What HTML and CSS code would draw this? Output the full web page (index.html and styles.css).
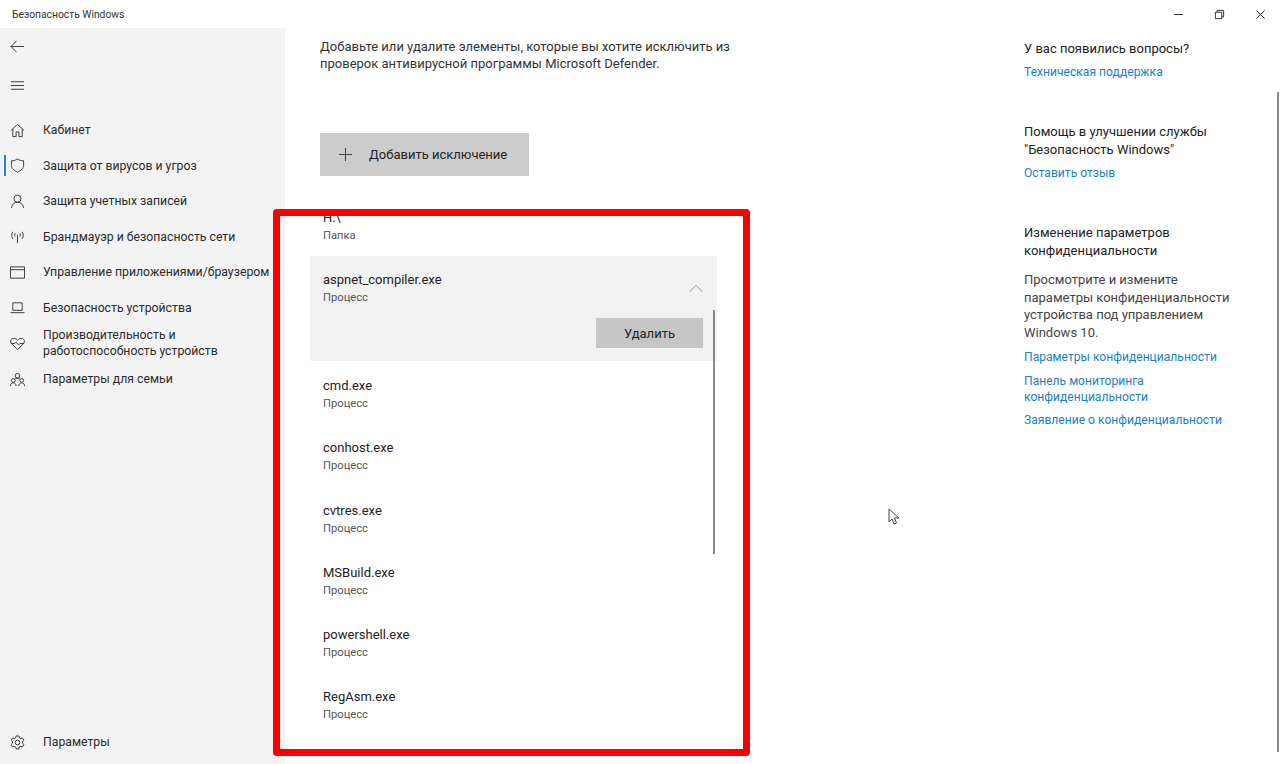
FILE: index.html
```html
<!DOCTYPE html>
<html lang="ru">
<head>
    <meta charset="UTF-8">
    <meta name="viewport" content="width=device-width, initial-scale=1.0">
    <title>Безопасность Windows</title>
    <link rel="stylesheet" href="styles.css">
</head>
<body>
    <div class="window">
        <div class="titlebar">
            <span class="app-title">Безопасность Windows</span>
            <div class="win-buttons">
                <svg viewBox="0 0 12 12"><path d="M1 6h10"/></svg>
                <svg viewBox="0 0 12 12"><path d="M1.500 3.500h7v7h-7zM3.500 3.500v-2h7v7h-2"/></svg>
                <svg viewBox="0 0 12 12"><path d="M1.500 1.500l9 9M10.500 1.500l-9 9"/></svg>
            </div>
        </div>
        <div class="content">
            <nav class="sidebar">
                <div class="nav-top">
                    <svg class="icon" viewBox="0 0 16 16"><path d="M1 8h14M1 8l6-6M1 8l6 6"/></svg>
                    <svg class="icon" viewBox="0 0 16 16"><path d="M1 4h14M1 8h14M1 12h14"/></svg>
                </div>
                <ul class="nav-list">
                    <li class="nav-item">
                        <svg class="icon" viewBox="0 0 16 16"><path d="M1 8l7-6.500L15 8M3 6.500V14.500h3.500V9.500h3v5H13V6.500"/></svg>
                        <span>Кабинет</span>
                    </li>
                    <li class="nav-item active">
                        <svg class="icon" viewBox="0 0 16 16"><path d="M8 1c2 1.500 4 2 6.500 2v5c0 3.500-3 5.500-6.500 7-3.500-1.500-6.500-3.500-6.500-7V3C4 3 6 2.500 8 1z"/></svg>
                        <span>Защита от вирусов и угроз</span>
                    </li>
                    <li class="nav-item">
                        <svg class="icon" viewBox="0 0 16 16"><circle cx="8" cy="5" r="3.800"/><path d="M1.500 15c.5-4 3-6.200 6.500-6.200s6 2.200 6.500 6.200"/></svg>
                        <span>Защита учетных записей</span>
                    </li>
                    <li class="nav-item">
                        <svg class="icon" viewBox="0 0 16 16"><path d="M8 6v9M5.500 4.500c-.7 1-.7 2.500 0 3.500M10.500 4.500c.7 1 .7 2.500 0 3.500M3 3c-1.500 2-1.500 5.500 0 7.500M13 3c1.500 2 1.500 5.500 0 7.500"/></svg>
                        <span>Брандмауэр и безопасность сети</span>
                    </li>
                    <li class="nav-item">
                        <svg class="icon" viewBox="0 0 16 16"><path d="M.5 2h15v12H.5zM.5 5h15"/></svg>
                        <span>Управление приложениями/браузером</span>
                    </li>
                    <li class="nav-item">
                        <svg class="icon" viewBox="0 0 16 16"><path d="M3 3h10v8H3zM.5 13.500h15"/></svg>
                        <span>Безопасность устройства</span>
                    </li>
                    <li class="nav-item two-lines">
                        <svg class="icon" viewBox="0 0 16 16"><path d="M8 14.500L1.500 8C0 6 .5 3.500 2.500 2.800 5 2 6.500 3 8 4.500c1.500-1.500 3-2.500 5.500-1.700 2 .7 2.500 3.200 1 5.200zM1 8h4l1.500-1.500L9 9.500 10.500 8H15"/></svg>
                        <span>Производительность и<br>работоспособность устройств</span>
                    </li>
                    <li class="nav-item">
                        <svg class="icon" viewBox="0 0 16 16"><circle cx="8" cy="4" r="2.500"/><circle cx="3.500" cy="9" r="2"/><circle cx="12.500" cy="9" r="2"/><path d="M.5 15c0-2 1.200-3.500 3-3.500s3 1.500 3 3.500M9.500 15c0-2 1.200-3.500 3-3.500s3 1.500 3 3.500M5.500 7.500C6 7 7 6.500 8 6.500s2 .5 2.500 1"/></svg>
                        <span>Параметры для семьи</span>
                    </li>
                </ul>
                <div class="nav-item nav-bottom">
                    <svg class="icon" viewBox="0 0 16 16"><circle cx="8" cy="8" r="2.500"/><path d="M6.500 1h3l.4 2 1.500.8 1.900-.7 1.500 2.600-1.500 1.300v1.800l1.500 1.300-1.500 2.600-1.900-.7-1.500.8-.4 2h-3l-.4-2-1.500-.8-1.900.7L1.200 10.100l1.500-1.300V7L1.200 5.700l1.500-2.600 1.900.7 1.500-.8z"/></svg>
                    <span>Параметры</span>
                </div>
            </nav>

            <main class="main">
                <p class="intro">Добавьте или удалите элементы, которые вы хотите исключить из проверок антивирусной программы Microsoft Defender.</p>
                <button class="add-btn">
                    <svg viewBox="0 0 16 16"><path d="M8 1v14M1 8h14"/></svg>
                    <span>Добавить исключение</span>
                </button>
                <div class="list">
                    <div class="list-item first">
                        <div class="item-name">H:\</div>
                        <div class="item-type">Папка</div>
                    </div>
                    <div class="list-item open">
                        <div class="item-name">aspnet_compiler.exe</div>
                        <div class="item-type">Процесс</div>
                        <svg class="chevron" viewBox="0 0 16 10"><path d="M1 8.500l7-7 7 7"/></svg>
                        <div class="item-actions"><button class="remove-btn">Удалить</button></div>
                    </div>
                    <div class="list-item">
                        <div class="item-name">cmd.exe</div>
                        <div class="item-type">Процесс</div>
                    </div>
                    <div class="list-item">
                        <div class="item-name">conhost.exe</div>
                        <div class="item-type">Процесс</div>
                    </div>
                    <div class="list-item">
                        <div class="item-name">cvtres.exe</div>
                        <div class="item-type">Процесс</div>
                    </div>
                    <div class="list-item">
                        <div class="item-name">MSBuild.exe</div>
                        <div class="item-type">Процесс</div>
                    </div>
                    <div class="list-item">
                        <div class="item-name">powershell.exe</div>
                        <div class="item-type">Процесс</div>
                    </div>
                    <div class="list-item">
                        <div class="item-name">RegAsm.exe</div>
                        <div class="item-type">Процесс</div>
                    </div>
                    <div class="list-scroll"></div>
                </div>
            </main>

            <aside class="side-info">
                <section class="info-block">
                    <h3>У вас появились вопросы?</h3>
                    <a class="link">Техническая поддержка</a>
                </section>
                <section class="info-block">
                    <h3>Помощь в улучшении службы "Безопасность Windows"</h3>
                    <a class="link">Оставить отзыв</a>
                </section>
                <section class="info-block">
                    <h3>Изменение параметров конфиденциальности</h3>
                    <p>Просмотрите и измените параметры конфиденциальности устройства под управлением Windows 10.</p>
                    <a class="link">Параметры конфиденциальности</a>
                    <a class="link">Панель мониторинга конфиденциальности</a>
                    <a class="link">Заявление о конфиденциальности</a>
                </section>
            </aside>
        </div>
        <div class="page-scroll"></div>
    </div>

    <!-- annotation and pointer lie over the page -->
    <div class="red-frame"></div>
    <svg class="cursor" viewBox="0 0 12 18"><path d="M1 1v13l3-3 2 5 2.500-1-2-5H11z"/></svg>
</body>
</html>
```

FILE: styles.css
```css
*{
    box-sizing: border-box;
}
html, body{
    height: 100%;
}
body{
    margin: 0;
    background: #fff;
    color: #1f1f1f;
    font-family: Roboto, "Noto Sans", sans-serif;
    font-size: 13px;
    overflow: hidden;
}
.window{
    position: relative;
    width: 1280px;
    height: 764px;
    display: flex;
    flex-direction: column;
}
svg{
    fill: none;
    stroke: #333;
    stroke-width: 1;
}

/* title bar */
.titlebar{
    height: 28px;
    flex: none;
    display: flex;
    justify-content: space-between;
    align-items: center;
    padding-left: 12px;
}
.app-title{
    font-size: 10.300px;
    color: #333;
}
.win-buttons{
    display: flex;
    gap: 30px;
    padding-right: 14px;
}
.win-buttons svg{
    width: 11px;
    height: 11px;
    stroke: #222;
}

.content{
    flex: 1;
    display: flex;
    min-height: 0;
}

/* left nav */
.sidebar{
    width: 285px;
    flex: none;
    background: #f3f3f3;
    display: flex;
    flex-direction: column;
    padding-bottom: 4px;
}
.icon{
    width: 15px;
    height: 15px;
    flex: none;
}
.nav-top{
    display: flex;
    flex-direction: column;
    gap: 24px;
    padding: 11px 0 0 10px;
}
.nav-list{
    list-style: none;
    margin: 19.400px 0 0;
    padding: 0;
}
.nav-item{
    position: relative;
    height: 35.500px;
    display: flex;
    align-items: center;
    gap: 18px;
    padding-left: 10px;
    font-size: 12.250px;
    color: #2b2b2b;
}
.nav-item.two-lines{
    height: 36px;
    line-height: 16px;
}
.nav-item.active::before{
    content: "";
    position: absolute;
    left: 4px;
    top: 7px;
    width: 2px;
    height: 21px;
    background: #2b86c9;
}
.nav-bottom{
    margin-top: auto;
}

/* middle column */
.main{
    width: 465px;
    flex: none;
    padding-left: 35px;
}
.intro{
    width: 430px;
    margin: 10px 0 0;
    line-height: 17px;
    color: #333;
}
.add-btn{
    display: flex;
    align-items: center;
    gap: 16px;
    width: 209px;
    height: 43px;
    margin-top: 61px;
    padding: 0 0 0 18px;
    border: 0;
    background: #ccc;
    font: inherit;
    color: #222;
}
.add-btn svg{
    width: 15px;
    height: 15px;
}
.list{
    position: relative;
    width: 408px;
    height: 540px;
    margin: 34px 0 0 -11px;
    overflow: hidden;
}
.list-item{
    position: relative;
    height: 62.300px;
    padding: 15px 14px 0;
}
.list-item.first{
    height: 47px;
    padding-top: 0;
    margin-top: -1px;
}
.list-item.open{
    height: 105px;
    margin: 0 0 1px 1px;
    padding: 15px 14px 0 13px;
    background: #f2f2f2;
}
.item-name{
    line-height: 18px;
    color: #222;
}
.item-type{
    font-size: 11.200px;
    line-height: 18px;
    color: #555;
}
.chevron{
    position: absolute;
    right: 14px;
    top: 28px;
    width: 14px;
    height: 9px;
    stroke: #888;
}
.item-actions{
    display: flex;
    justify-content: flex-end;
    margin-top: 11px;
}
.remove-btn{
    width: 107px;
    height: 30px;
    border: 0;
    background: #c6c6c6;
    font: inherit;
    color: #222;
}
.list-scroll{
    position: absolute;
    right: 2px;
    top: 100px;
    width: 2px;
    height: 244px;
    background: #8a8a8a;
}

/* right column */
.side-info{
    width: 256px;
    margin-left: 274px;
    padding-top: 12px;
}
.info-block{
    margin-bottom: 43px;
}
.info-block h3{
    margin: 0 0 6px;
    font-size: 13px;
    font-weight: 400;
    line-height: 18px;
    color: #222;
}
.info-block p{
    width: 215px;
    margin: 11px 0 8px;
    line-height: 17.500px;
    color: #444;
}
.link{
    display: block;
    width: 215px;
    margin-bottom: 7.500px;
    font-size: 12.100px;
    line-height: 16px;
    color: #1b7fc4;
}
.page-scroll{
    position: absolute;
    right: 1px;
    top: 92px;
    width: 2px;
    height: 660px;
    background: #8a8a8a;
}

/* overlays */
.red-frame{
    position: absolute;
    left: 273px;
    top: 209px;
    width: 477px;
    height: 547px;
    border: 7px solid #fb0000;
    border-radius: 4px;
}
.cursor{
    position: absolute;
    left: 888px;
    top: 508px;
    width: 12px;
    height: 18px;
    fill: #fff;
    stroke: #444;
}
```
